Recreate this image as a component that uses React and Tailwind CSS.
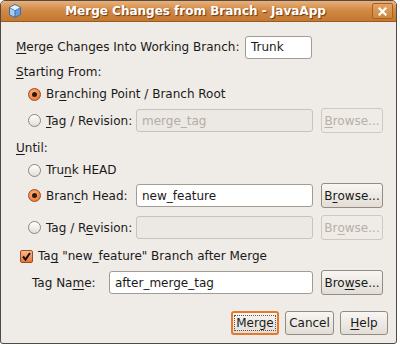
import React from 'react'

const font = { fontFamily: '"DejaVu Sans", "Liberation Sans", sans-serif' }

function U({ children }) {
  return <span className="underline underline-offset-[2px] decoration-1">{children}</span>
}

function Radio({ checked }) {
  return (
    <span
      className={`inline-flex items-center justify-center w-[13px] h-[13px] rounded-full border shrink-0 ${
        checked
          ? 'border-[#9a4c1c] bg-[radial-gradient(circle_at_40%_35%,#ffb27a,#e8692a)]'
          : 'border-[#8c8680] bg-[linear-gradient(#ffffff,#e2ded8)]'
      }`}
    >
      {checked && <span className="w-[5px] h-[5px] rounded-full bg-[#2e1a0c]" />}
    </span>
  )
}

function Field({ value, disabled, className = '' }) {
  return (
    <div
      className={`h-[23px] shrink-0 rounded-[3px] border flex items-center px-[5px] text-[12px] whitespace-nowrap ${
        disabled ? 'bg-[#ece8e3] border-[#c9c3bb] text-[#b5ada5]' : 'bg-white border-[#a49c93] text-[#1a1a1a]'
      } ${className}`}
    >
      {value}
    </div>
  )
}

function Browse({ disabled, u }) {
  const label = 'Browse...'
  return (
    <div
      className={`w-[62px] h-[25px] shrink-0 rounded-[3px] border flex items-center justify-center text-[12px] whitespace-nowrap ${
        disabled
          ? 'border-[#cfc9c1] bg-[#efebe7] text-[#b8b0a8]'
          : 'border-[#948c83] bg-[linear-gradient(#f8f6f3,#e2ddd6)] text-[#1a1a1a]'
      }`}
    >
      {label.slice(0, u)}
      <U>{label[u]}</U>
      {label.slice(u + 1)}
    </div>
  )
}

export default function App() {
  return (
    <div className="w-[400px] h-[346px] bg-white" style={font}>
      <div className="w-[397px] h-[344px] rounded-t-[5px] rounded-b-[3px] border border-[#4e4a46] bg-[#efebe7] flex flex-col overflow-hidden">
        {/* title bar */}
        <div className="h-[21px] shrink-0 flex items-center bg-[linear-gradient(#e9b07a,#d28a45_45%,#c47830)] border-b border-[#9a5a22]">
          <svg width="16" height="16" viewBox="0 0 16 16" className="ml-[6px]">
            <path d="M8 1 L14 4.2 L14 11.8 L8 15 L2 11.8 L2 4.2 Z" fill="#3d6ea8" />
            <path d="M8 2 L13 4.6 L8 7.2 L3 4.6 Z" fill="#e6f2fc" />
            <path d="M3 5.3 L7.5 7.8 L7.5 13.8 L3 11.4 Z" fill="#a9cdf0" />
            <path d="M8.5 7.8 L13 5.3 L13 11.4 L8.5 13.8 Z" fill="#6d9fd6" />
          </svg>
          <div className="flex-1 text-center font-bold text-[12px] text-white [text-shadow:1px_1px_1px_#6b3a10] pr-[4px] whitespace-nowrap">
            Merge Changes from Branch - JavaApp
          </div>
          <div className="w-[21px] h-[16px] mr-[3px] rounded-[2px] border border-[#a8621f] bg-[linear-gradient(#e3a468,#cf8640)] flex items-center justify-center">
            <svg width="9" height="9" viewBox="0 0 9 9">
              <path d="M1.5 1.5 L7.5 7.5 M7.5 1.5 L1.5 7.5" stroke="#fff" strokeWidth="2.2" strokeLinecap="square" />
            </svg>
          </div>
        </div>

        <div className="flex flex-col text-[12px] text-[#1a1a1a] pl-[15px] whitespace-nowrap">
          <div className="mt-[14px] h-[22px] flex items-center">
            <span className="w-[229px] shrink-0"><U>M</U>erge Changes Into Working Branch:</span>
            <Field value="Trunk" className="w-[67px]" />
          </div>

          <div className="mt-[4px] h-[20px] flex items-center">
            <span><U>S</U>tarting From:</span>
          </div>

          <div className="mt-[2px] h-[20px] flex items-center pl-[12px]">
            <Radio checked />
            <span className="ml-[5px]">Br<U>a</U>nching Point / Branch Root</span>
          </div>

          <div className="mt-[4px] h-[25px] flex items-center pl-[12px]">
            <Radio />
            <span className="ml-[5px] w-[90px] shrink-0"><U>T</U>ag / Revision:</span>
            <Field value="merge_tag" disabled className="w-[177px]" />
            <div className="ml-[8px]"><Browse disabled u={0} /></div>
          </div>

          <div className="mt-[5px] h-[20px] flex items-center">
            <span><U>U</U>ntil:</span>
          </div>

          <div className="mt-[2px] h-[20px] flex items-center pl-[12px]">
            <Radio />
            <span className="ml-[5px]">Tru<U>n</U>k HEAD</span>
          </div>

          <div className="mt-[3px] h-[25px] flex items-center pl-[12px]">
            <Radio checked />
            <span className="ml-[5px] w-[90px] shrink-0">Bran<U>c</U>h Head:</span>
            <Field value="new_feature" className="w-[177px]" />
            <div className="ml-[8px]"><Browse u={1} /></div>
          </div>

          <div className="mt-[7px] h-[25px] flex items-center pl-[12px]">
            <Radio />
            <span className="ml-[5px] w-[90px] shrink-0">Tag / R<U>e</U>vision:</span>
            <Field value="" disabled className="w-[177px]" />
            <div className="ml-[8px]"><Browse disabled u={2} /></div>
          </div>

          <div className="mt-[6px] h-[20px] flex items-center pl-[4px]">
            <span className="w-[13px] h-[13px] rounded-[2px] border border-[#9a4c1c] bg-[linear-gradient(#f8b88a,#e8773a)] flex items-center justify-center">
              <svg width="11" height="11" viewBox="0 0 11 11">
                <path d="M2 5.5 L4.5 8.5 L9 2" stroke="#111" strokeWidth="2" fill="none" />
              </svg>
            </span>
            <span className="ml-[5px]">Ta<U>g</U> "new_feature" Branch after Merge</span>
          </div>

          <div className="mt-[4px] h-[25px] flex items-center pl-[16px]">
            <span className="w-[77px] shrink-0">Tag Na<U>m</U>e:</span>
            <Field value="after_merge_tag" className="w-[204px]" />
            <div className="ml-[8px]"><Browse u={3} /></div>
          </div>

          <div className="mt-[16px] h-[24px] flex items-center justify-end pr-[8px] gap-[6px]">
            <div className="w-[48px] h-[24px] rounded-[3px] border-2 border-[#e8782a] bg-[linear-gradient(#f8f6f3,#e2ddd6)] flex items-center justify-center">
              <span className="px-[1px] border border-dotted border-[#555] leading-[14px]">Merge</span>
            </div>
            <div className="w-[49px] h-[24px] rounded-[3px] border border-[#948c83] bg-[linear-gradient(#f8f6f3,#e2ddd6)] flex items-center justify-center">
              Cancel
            </div>
            <div className="w-[48px] h-[24px] rounded-[3px] border border-[#948c83] bg-[linear-gradient(#f8f6f3,#e2ddd6)] flex items-center justify-center">
              <span><U>H</U>elp</span>
            </div>
          </div>
        </div>
      </div>
    </div>
  )
}
